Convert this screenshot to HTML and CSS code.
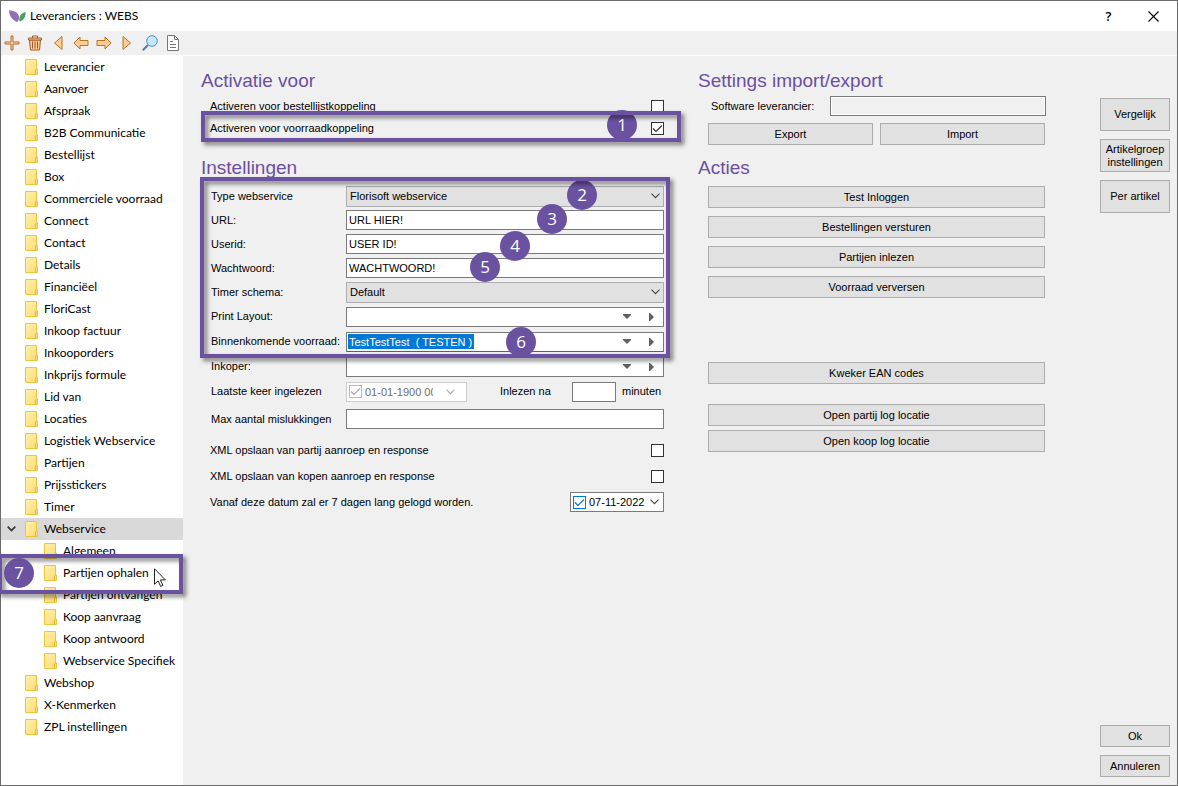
FILE: index.html
```html
<!DOCTYPE html>
<html lang="nl">
<head>
<meta charset="utf-8">
<meta name="viewport" content="width=device-width, initial-scale=1">
<title>Leveranciers : WEBS</title>
<link rel="stylesheet" href="styles.css">
</head>
<body>
<svg class="defs" aria-hidden="true">
  <defs>
    <linearGradient id="paper" x1="0" y1="0" x2="1" y2="1"><stop offset="0" stop-color="#ffefad"/><stop offset="1" stop-color="#ffdc72"/></linearGradient>
    <symbol id="folder" viewBox="0 0 13 16"><path d="M.5 .5h11v9.500h1v5.500h-12z" fill="url(#paper)" stroke="#edc53a"/><path d="M10.500 15.500v-4.500l1-1" fill="none" stroke="#e5b72c"/></symbol>
    <symbol id="chevron" viewBox="0 0 9 6"><path d="M.5 .7l4 4 4-4" fill="none" stroke="currentColor" stroke-width="1.100"/></symbol>
    <symbol id="down" viewBox="0 0 8 5"><path d="M0 0h8v1L4 5 0 1z" fill="#606060"/></symbol>
    <symbol id="next" viewBox="0 0 5 8"><path d="M0 0h1l4 4-4 4H0z" fill="#606060"/></symbol>
  </defs>
</svg>
<div class="window">
  <header class="titlebar">
    <svg class="logo" viewBox="0 0 17 13" aria-hidden="true"><path d="M0 .5C5 .3 9.500 3 10 6.500c.2 2-.3 4-1.500 5.500C4.500 11.500 0 6 0 .5z" fill="#9270b5"/><path d="M16.500 2c.3 4.500-1.500 8.500-6 9.500C9.500 7 12 3 16.500 2z" fill="#45a35a"/></svg>
    <h1 class="title">Leveranciers : WEBS</h1>
    <button class="caption help" aria-label="Help">?</button>
    <button class="caption" aria-label="Sluiten"><svg width="11" height="11" viewBox="0 0 11 11"><path d="M.5 .5l10 10M10.500 .5l-10 10" stroke="#000" stroke-width="1.100"/></svg></button>
  </header>

  <div class="toolbar" role="toolbar" aria-label="Acties">
    <button class="tool" aria-label="Nieuw"><svg width="16" height="16" viewBox="0 0 16 16"><path d="M7 1h2v6h6v2H9v6H7V9H1V7h6z" fill="#ffd3a0" stroke="#b4692f"/></svg></button>
    <button class="tool" aria-label="Verwijderen"><svg width="16" height="16" viewBox="0 0 16 16"><path d="M2.500 5h11l-1 10h-9z" fill="#ffc994" stroke="#9b5f2a"/><path d="M1.500 3h13v2h-13z" fill="#ffc994" stroke="#9b5f2a"/><path d="M5.500 3V1h5v2M5.500 6.500v7M8 6.500v7M10.500 6.500v7" fill="none" stroke="#9b5f2a"/></svg></button>
    <button class="tool" aria-label="Eerste"><svg width="16" height="16" viewBox="0 0 16 16"><path d="M12 1.500v13L4.500 8z" fill="#ffcb95" stroke="#b97428"/></svg></button>
    <button class="tool" aria-label="Vorige"><svg width="16" height="16" viewBox="0 0 16 16"><path d="M1 8l6-6v3.500h8v5H7V14z" fill="#ffcb95" stroke="#b97428"/></svg></button>
    <button class="tool" aria-label="Volgende"><svg width="16" height="16" viewBox="0 0 16 16"><path d="M15 8L9 2v3.500H1v5h8V14z" fill="#ffcb95" stroke="#b97428"/></svg></button>
    <button class="tool" aria-label="Laatste"><svg width="16" height="16" viewBox="0 0 16 16"><path d="M4 1.500v13L11.500 8z" fill="#ffcb95" stroke="#b97428"/></svg></button>
    <button class="tool" aria-label="Zoeken"><svg width="16" height="16" viewBox="0 0 16 16"><path d="M6 10L.8 15.200" stroke="#4c74c9" stroke-width="2"/><circle cx="10" cy="6" r="5.300" fill="#c3e8fc" stroke="#4f8fcf"/></svg></button>
    <button class="tool" aria-label="Document"><svg width="16" height="16" viewBox="0 0 16 16"><path d="M2.500 .5h7l4 4v11h-11z" fill="#fff" stroke="#777"/><path d="M9.500 .5v4h4M5 6.500h3M5 9.500h6M5 12.500h6" fill="none" stroke="#777"/></svg></button>
  </div>

  <div class="body">
    <nav class="tree" aria-label="Onderdelen">
      <ul>
        <li><a href="#"><svg class="folder"><use href="#folder"/></svg>Leverancier</a></li>
        <li><a href="#"><svg class="folder"><use href="#folder"/></svg>Aanvoer</a></li>
        <li><a href="#"><svg class="folder"><use href="#folder"/></svg>Afspraak</a></li>
        <li><a href="#"><svg class="folder"><use href="#folder"/></svg>B2B Communicatie</a></li>
        <li><a href="#"><svg class="folder"><use href="#folder"/></svg>Bestellijst</a></li>
        <li><a href="#"><svg class="folder"><use href="#folder"/></svg>Box</a></li>
        <li><a href="#"><svg class="folder"><use href="#folder"/></svg>Commerciele voorraad</a></li>
        <li><a href="#"><svg class="folder"><use href="#folder"/></svg>Connect</a></li>
        <li><a href="#"><svg class="folder"><use href="#folder"/></svg>Contact</a></li>
        <li><a href="#"><svg class="folder"><use href="#folder"/></svg>Details</a></li>
        <li><a href="#"><svg class="folder"><use href="#folder"/></svg>Financiëel</a></li>
        <li><a href="#"><svg class="folder"><use href="#folder"/></svg>FloriCast</a></li>
        <li><a href="#"><svg class="folder"><use href="#folder"/></svg>Inkoop factuur</a></li>
        <li><a href="#"><svg class="folder"><use href="#folder"/></svg>Inkooporders</a></li>
        <li><a href="#"><svg class="folder"><use href="#folder"/></svg>Inkprijs formule</a></li>
        <li><a href="#"><svg class="folder"><use href="#folder"/></svg>Lid van</a></li>
        <li><a href="#"><svg class="folder"><use href="#folder"/></svg>Locaties</a></li>
        <li><a href="#"><svg class="folder"><use href="#folder"/></svg>Logistiek Webservice</a></li>
        <li><a href="#"><svg class="folder"><use href="#folder"/></svg>Partijen</a></li>
        <li><a href="#"><svg class="folder"><use href="#folder"/></svg>Prijsstickers</a></li>
        <li><a href="#"><svg class="folder"><use href="#folder"/></svg>Timer</a></li>
        <li><a href="#" class="open"><svg class="expander" viewBox="0 0 9 6"><path d="M.7 .7l3.800 3.800L8.300 .7" fill="none" stroke="#333" stroke-width="1.700"/></svg><svg class="folder"><use href="#folder"/></svg>Webservice</a>
          <ul class="sub">
            <li><a href="#"><svg class="folder"><use href="#folder"/></svg>Algemeen</a></li>
            <li class="marked"><a href="#"><svg class="folder"><use href="#folder"/></svg>Partijen ophalen</a>
              <span class="callout callout-tree"></span>
              <span class="badge b7">7</span>
              <svg class="pointer" viewBox="0 0 12 19" aria-hidden="true"><path d="M.5 .8v15.500l3.600-3.500 2.500 5.600 2.300-1-2.500-5.500h5z" fill="#fff" stroke="#222"/></svg>
            </li>
            <li><a href="#"><svg class="folder"><use href="#folder"/></svg>Partijen ontvangen</a></li>
            <li><a href="#"><svg class="folder"><use href="#folder"/></svg>Koop aanvraag</a></li>
            <li><a href="#"><svg class="folder"><use href="#folder"/></svg>Koop antwoord</a></li>
            <li><a href="#"><svg class="folder"><use href="#folder"/></svg>Webservice Specifiek</a></li>
          </ul>
        </li>
        <li><a href="#"><svg class="folder"><use href="#folder"/></svg>Webshop</a></li>
        <li><a href="#"><svg class="folder"><use href="#folder"/></svg>X-Kenmerken</a></li>
        <li><a href="#"><svg class="folder"><use href="#folder"/></svg>ZPL instellingen</a></li>
      </ul>
    </nav>

    <main class="main">
      <div class="column">
        <section class="group">
          <h2>Activatie voor</h2>
          <div class="check-row"><label for="act1">Activeren voor bestellijstkoppeling</label><input type="checkbox" id="act1"></div>
          <div class="check-row marked"><label for="act2">Activeren voor voorraadkoppeling</label><input type="checkbox" id="act2" checked>
            <span class="badge b1">1</span>
            <span class="callout callout-check"></span>
          </div>
        </section>
        <section>
          <h2>Instellingen</h2>
          <div class="settings">
            <div class="row"><label for="type">Type webservice</label><div class="select"><select id="type"><option>Florisoft webservice</option></select><svg class="chev"><use href="#chevron"/></svg></div></div>
            <div class="row"><label for="url">URL:</label><input class="field" id="url" type="text" value="URL HIER!"></div>
            <div class="row"><label for="user">Userid:</label><input class="field" id="user" type="text" value="USER ID!"></div>
            <div class="row"><label for="pass">Wachtwoord:</label><input class="field" id="pass" type="text" value="WACHTWOORD!"></div>
            <div class="row"><label for="timer">Timer schema:</label><div class="select"><select id="timer"><option>Default</option></select><svg class="chev"><use href="#chevron"/></svg></div></div>
            <div class="row tall"><label for="layout">Print Layout:</label><div class="lookup"><input id="layout" type="text"><button aria-label="Kies layout"><svg width="8" height="5"><use href="#down"/></svg></button><button aria-label="Open layout"><svg width="5" height="8"><use href="#next"/></svg></button></div></div>
            <div class="row tall"><label for="stock">Binnenkomende voorraad:</label><div class="lookup focused"><span class="value"><input id="stock" type="text" value="TestTestTest  ( TESTEN )"></span><button aria-label="Kies voorraad"><svg width="8" height="5"><use href="#down"/></svg></button><button aria-label="Open voorraad"><svg width="5" height="8"><use href="#next"/></svg></button></div></div>
            <span class="badge b2">2</span>
            <span class="badge b3">3</span>
            <span class="badge b4">4</span>
            <span class="badge b5">5</span>
            <span class="badge b6">6</span>
            <span class="callout callout-settings"></span>
          </div>
          <div class="row tall"><label for="buyer">Inkoper:</label><div class="lookup"><input id="buyer" type="text"><button aria-label="Kies inkoper"><svg width="8" height="5"><use href="#down"/></svg></button><button aria-label="Open inkoper"><svg width="5" height="8"><use href="#next"/></svg></button></div></div>
          <div class="row tall"><label for="last">Laatste keer ingelezen</label>
            <div class="split">
              <div class="date disabled"><input type="checkbox" checked disabled aria-label="Datum actief"><span class="clip"><input id="last" type="text" value="01-01-1900 00:00" disabled></span><button disabled aria-label="Kalender"><svg class="chev"><use href="#chevron"/></svg></button></div>
              <label for="mins">Inlezen na</label>
              <input class="field minutes" id="mins" type="text" aria-describedby="unit"><span class="unit" id="unit">minuten</span>
            </div>
          </div>
          <div class="row roomy"><label for="max">Max aantal mislukkingen</label><input class="field" id="max" type="text"></div>
          <div class="log">
            <div class="check-row"><label for="xml1">XML opslaan van partij aanroep en response</label><input type="checkbox" id="xml1"></div>
            <div class="check-row"><label for="xml2">XML opslaan van kopen aanroep en response</label><input type="checkbox" id="xml2"></div>
            <div class="check-row"><label for="from">Vanaf deze datum zal er 7 dagen lang gelogd worden.</label>
              <div class="date active"><input type="checkbox" checked aria-label="Datum gebruiken"><input id="from" type="text" value="07-11-2022"><button aria-label="Kalender"><svg class="chev"><use href="#chevron"/></svg></button></div></div>
          </div>
        </section>
      </div>

      <div class="column">
        <section class="group">
          <h2>Settings import/export</h2>
          <div class="software"><label for="soft">Software leverancier:</label><input class="readonly" id="soft" type="text" readonly></div>
          <div class="pair"><button class="btn">Export</button><button class="btn">Import</button></div>
        </section>
        <section>
          <h2>Acties</h2>
          <div class="actions">
            <button class="btn">Test Inloggen</button>
            <button class="btn">Bestellingen versturen</button>
            <button class="btn">Partijen inlezen</button>
            <button class="btn">Voorraad verversen</button>
          </div>
          <div class="actions ean"><button class="btn">Kweker EAN codes</button></div>
          <div class="actions logs"><button class="btn">Open partij log locatie</button><button class="btn">Open koop log locatie</button></div>
        </section>
      </div>

      <aside class="side">
        <button class="btn big">Vergelijk</button>
        <button class="btn big">Artikelgroep instellingen</button>
        <button class="btn big">Per artikel</button>
        <button class="btn ok">Ok</button>
        <button class="btn">Annuleren</button>
      </aside>
    </main>
  </div>
</div>
</body>
</html>
```

FILE: styles.css
```css
* { box-sizing: border-box; }
body { margin: 0; font: 11px/13px "Liberation Sans", Arial, sans-serif; color: #000; }
button, input, select { font: inherit; color: inherit; margin: 0; }
button { padding: 0; border: 0; background: none; }
ul { list-style: none; margin: 0; padding: 0; }
svg { display: block; flex: none; }
.defs { position: absolute; width: 0; height: 0; }

.window { display: flex; flex-direction: column; min-height: 100vh; border: 1px solid #6b6b6b; background: #f0f0f0; }

.titlebar { display: flex; align-items: center; height: 30px; padding: 0 18px 0 8px; background: #fff; }
.logo { width: 17px; height: 13px; }
.title { flex: 1; margin: 0; padding-left: 4px; font: 12px/16px Lato, "Open Sans", sans-serif; }
.caption { display: grid; place-items: center; width: 11px; height: 20px; }
.help { margin-right: 34px; font: 600 13px/16px "Open Sans", sans-serif; }

.toolbar { display: flex; align-items: center; gap: 7px; height: 25px; padding-left: 3px; border-bottom: 1px solid #fff; }
.tool { width: 16px; height: 16px; }

.body { display: flex; flex: 1; }

.tree { position: relative; z-index: 1; flex: none; width: 182px; background: #fff; font: 12px/22px Lato, "Open Sans", sans-serif; }
.tree a { display: flex; align-items: center; gap: 6px; height: 22px; padding-left: 24px; color: inherit; text-decoration: none; white-space: nowrap; }
.tree a.open { padding-left: 6px; background: #d9d9d9; }
.tree .sub a { padding-left: 43px; }
.folder { width: 13px; height: 16px; }
.expander { width: 9px; height: 6px; margin-right: 3px; }
.pointer { position: absolute; z-index: 4; left: 153px; top: 6px; width: 12px; height: 19px; }

.main { display: grid; grid-template-columns: 463fr 436fr 70px; flex: 1; padding: 13px 7px 8px 18px; }
.column { min-width: 0; }
.column + .column { margin-left: 34px; margin-right: 54px; }
.group { height: 87px; }
h2 { margin: 0; font-weight: 400; font-size: 19px; line-height: 24px; color: #6b4fa0; }

.marked { position: relative; }
.check-row { display: flex; align-items: center; justify-content: space-between; height: 22px; padding-left: 9px; }
.group h2 + .check-row { margin-top: 2px; }
.log .check-row { height: 26px; }
.log { padding-top: 3px; }

input[type="checkbox"] { appearance: none; flex: none; width: 13px; height: 13px; border: 1px solid #333; background: #fff center / 11px 11px no-repeat; }
input[type="checkbox"]:checked { background-image: url("data:image/svg+xml,%3Csvg xmlns='http://www.w3.org/2000/svg' viewBox='0 0 11 11'%3E%3Cpath d='M1 5.500l3 3 6-6' fill='none' stroke='%23333' stroke-width='1.200'/%3E%3C/svg%3E"); }

.settings { position: relative; padding-top: 4px; }
.row { display: grid; grid-template-columns: 135px 1fr; align-items: center; height: 24px; padding-left: 10px; white-space: nowrap; }
.row.tall { height: 25px; }
.row.roomy { height: 30px; }

.field, .lookup { width: 100%; height: 20px; border: 1px solid #7a7a7a; background: #fff; }
.field { padding: 0 2px; }
.select { display: grid; align-items: center; }
.select select { grid-area: 1 / 1; appearance: none; width: 100%; height: 21px; padding: 0 3px; border: 1px solid #adadad; border-radius: 0; background: #e1e1e1; }
.select .chev { grid-area: 1 / 1; justify-self: end; margin-right: 4px; pointer-events: none; }
.chev { width: 9px; height: 6px; color: #444; }

.lookup { display: flex; align-items: center; padding-right: 2px; }
.lookup input { flex: 1; min-width: 0; height: 15px; padding: 0 2px; border: 0; background: none; }
.lookup button { display: grid; place-items: center; width: 20px; height: 16px; }
.lookup button + button { margin-left: 4px; }
.lookup.focused { border-bottom-color: #0078d7; }
.value { flex: 1; padding-left: 1px; }
.lookup .value input { display: block; width: 126px; padding: 0 1px; background: #0078d7; color: #fff; }

.split { display: flex; align-items: center; }
.split label { margin-left: 33px; }
.minutes { width: 44px; margin-left: auto; }
.unit { width: 37px; margin: 0 5px 0 6px; }

.date { display: flex; align-items: center; height: 20px; padding: 0 4px 0 2px; border: 1px solid #7a7a7a; background: #fff; }
.date input[type="text"] { width: 60px; height: 16px; padding: 0; border: 0; background: none; }
.date.active { width: 94px; gap: 3px; }
.date.active input[type="text"] { flex: 1; min-width: 0; }
.date.active input[type="checkbox"] { border-color: #0078d7; background-image: url("data:image/svg+xml,%3Csvg xmlns='http://www.w3.org/2000/svg' viewBox='0 0 11 11'%3E%3Cpath d='M1 5.500l3 3 6-6' fill='none' stroke='%230078d7' stroke-width='1.200'/%3E%3C/svg%3E"); }
.date.disabled { width: 121px; gap: 3px; padding-right: 11px; border-color: #ccc; color: #6d6d6d; }
.date.disabled input[type="checkbox"] { border-color: #bbb; background-image: url("data:image/svg+xml,%3Csvg xmlns='http://www.w3.org/2000/svg' viewBox='0 0 11 11'%3E%3Cpath d='M1 5.500l3 3 6-6' fill='none' stroke='%23aaa' stroke-width='1.200'/%3E%3C/svg%3E"); }
.clip { width: 68px; overflow: hidden; }
.date.disabled input[type="text"] { display: block; width: 68px; }
.date.disabled .chev { color: #aaa; }
.date button { margin-left: auto; }

.software { display: flex; align-items: center; justify-content: space-between; height: 20px; margin-top: 3px; padding-left: 13px; }
.readonly { width: 216px; height: 20px; border: 1px solid #7a7a7a; background: #f0f0f0; box-shadow: inset 0 0 0 1px #fff; }
.pair { display: grid; grid-template-columns: 1fr 1fr; gap: 7px; padding: 7px 1px 0 10px; }
.actions { display: grid; gap: 8px; padding: 6px 1px 0 10px; }
.actions.ean { padding-top: 64px; }
.actions.logs { gap: 4px; padding-top: 20px; }
.btn { height: 22px; border: 1px solid #adadad; background: #e1e1e1; text-align: center; }

.side { display: flex; flex-direction: column; gap: 8px; padding-top: 29px; }
.big { height: 33px; }
.ok { margin-top: auto; }

.callout { position: absolute; z-index: 3; border: 4px solid #6b52a1; filter: drop-shadow(3px 3px 2px rgba(0, 0, 0, 0.5)); pointer-events: none; }
.callout-check { left: 0; right: -17px; top: -6px; height: 31px; }
.callout-settings { left: -1px; right: -6px; top: -3px; bottom: -4px; }
.callout-tree { left: -3px; right: 0; top: -8px; height: 40px; }
.badge { position: absolute; z-index: 2; width: 30px; height: 30px; border-radius: 50%; background: #6b52a1; color: #fff; text-align: center; font: 17px/30px "Open Sans", "Noto Sans", sans-serif; }
.b1 { right: 27px; top: -7px; }
.b2 { right: 67px; top: 0; }
.b3 { right: 97px; top: 24px; }
.b4 { right: 134px; top: 51px; }
.b5 { right: 164px; top: 72px; }
.b6 { right: 128px; top: 147px; }
.b7 { z-index: 4; left: 3px; top: -4px; }
```
